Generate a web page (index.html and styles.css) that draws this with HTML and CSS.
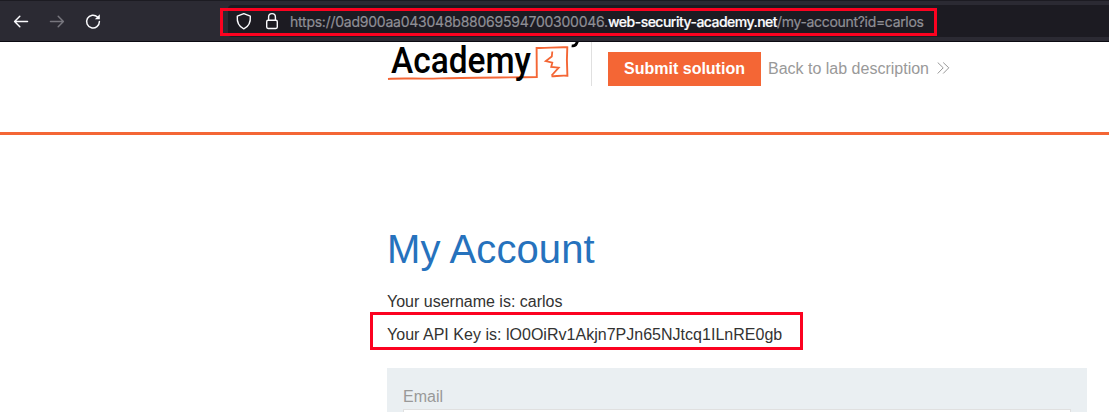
FILE: index.html
```html
<!DOCTYPE html>
<html lang="en">
<head>
<meta charset="utf-8">
<title>My Account</title>
<link rel="stylesheet" href="styles.css">
</head>
<body>
<div class="toolbar">
  <svg class="nav" width="110" height="36" viewBox="0 3 110 36" fill="none" stroke-width="1.5" stroke-linecap="round" stroke-linejoin="round">
    <path stroke="#fbfbfe" d="M27.5 21.5H14.8M19.8 16.3L14.6 21.5L19.8 26.7"/>
    <path stroke="#77767e" d="M50.5 21.5H63.2M58.2 16.3L63.4 21.5L58.2 26.7"/>
    <path stroke="#fbfbfe" d="M97.5 17A6.4 6.4 0 1 0 99.4 21.5"/>
    <path fill="#fbfbfe" d="M99.8 14.2V19.3H94.8Z"/>
  </svg>
  <div class="address">
    <svg class="guards" width="62" height="32" viewBox="228 5 62 32" fill="none" stroke="#fbfbfe" stroke-width="1.4" stroke-linejoin="round">
      <path d="M243.8 13.6L250.3 16.2C250.8 22 248.5 26.6 243.8 28.8C239.1 26.6 236.8 22 237.3 16.2Z"/>
      <rect x="266.7" y="20.3" width="10.6" height="8.2" rx="1.4"/>
      <path d="M268.6 20V17A3.4 3.4 0 0 1 275.4 17V20"/>
    </svg>
    <div class="url"><span class="host">https://0ad900aa043048b88069594700300046.</span><span class="domain">web-security-academy.net</span><span class="path">/my-account?id=carlos</span></div>
    <div class="mark mark-url"></div>
  </div>
</div>
<header class="lab-header">
  <svg class="logo" width="204" height="44" viewBox="387 42 204 44">
    <path d="M388 79C400 77.8 420 79.2 440 78.4S505 77.5 536.8 77L536.6 48C546 48.5 556 46.8 567.3 47.3L566.9 60L567.4 75.8C562 75.2 556 76.2 551.5 76.2" fill="none" stroke="#f46635" stroke-width="1.9"/>
    <path d="M552.3 51.5L551.8 56.5L545.8 61L552.3 62.6L551.2 67L558.7 67.7L551.6 75.5" fill="none" stroke="#f46635" stroke-width="1.8"/>
    <text class="wordmark" x="391" y="73" textLength="140" lengthAdjust="spacingAndGlyphs">Academy</text>
    <path d="M579.2 41L577.6 44.6C576.5 46.8 574.5 47.7 571.5 47.2L571.8 44.4C574.5 44.9 575.2 43.5 576 41Z"/>
  </svg>
  <div class="actions">
    <a class="submit">Submit solution</a>
    <a class="back">Back to lab description</a>
    <svg class="chevrons" width="13" height="14" viewBox="0 0 13 14" fill="none" stroke="#999" stroke-width="1"><path d="M.7 .5L6.2 5.8L.7 11.5M6.2 .5L11.8 5.8L6.2 11.5"/></svg>
  </div>
</header>
<main class="account">
  <h1>My Account</h1>
  <p>Your username is: carlos</p>
  <p class="key">Your API Key is: lO0OiRv1Akjn7PJn65NJtcq1ILnRE0gb<span class="mark mark-key"></span></p>
  <form class="email-form">
    <label for="email">Email</label>
    <input id="email" type="email">
  </form>
</main>
</body>
</html>
```
FILE: styles.css
```css
* { box-sizing: border-box; }
html, body { height: 100%; overflow: hidden; }
body { display: flex; flex-direction: column; margin: 0; background: #fff; color: #333332; font: 16px/20px "Liberation Sans", Arial, sans-serif; }
.toolbar { display: flex; flex: none; align-items: flex-start; height: 42px; padding-top: 4px; background: #2b2a33; border-top: 1px solid #1c1b22; border-bottom: 1px solid #0b0a12; }
.nav { margin: -2px 118px 0 0; }
.address { position: relative; display: flex; flex: 1; height: 32px; background: #1c1b22; border-radius: 4px 0 0 4px; }
.guards { flex: none; }
.url { display: flex; color: #8f8f96; font: 14px/34px Inter, sans-serif; white-space: nowrap; -webkit-text-stroke: 0.2px; }
.host { width: 318px; letter-spacing: -0.24px; }
.domain { width: 169px; color: #fbfbfe; letter-spacing: -0.52px; font-weight: 500; }
.path { letter-spacing: -0.32px; }
.mark { position: absolute; border: 3px solid #fc0220; }
.mark-url { left: -8px; top: 3px; width: 717px; height: 28px; }
.lab-header { display: flex; flex: none; height: 93px; padding-left: 387px; border-bottom: 3px solid #f46635; }
.logo { flex: none; }
.wordmark { font: 500 37px Roboto, sans-serif; }
.actions { display: flex; align-items: flex-start; height: 44px; padding: 10px 0 0 16px; border-left: 1px solid #e0e0e0; }
.submit { width: 153px; height: 34px; background: #f46635; color: #fff; font-weight: bold; line-height: 34px; text-align: center; }
.back { margin-left: 7px; color: #999; line-height: 34px; }
.chevrons { margin: 10px 0 0 8px; }
.account { display: flex; flex: 1; flex-direction: column; min-height: 0; width: 1087px; padding: 91px 0 0 387px; }
h1 { flex: none; margin: 0; color: #2672bd; font-size: 40px; font-weight: normal; line-height: 46px; letter-spacing: 0.1px; }
p { margin: 20px 0 0; }
.key { position: relative; margin-top: 13px; letter-spacing: 0.02px; }
.mark-key { left: -17px; top: -13px; width: 433px; height: 38px; }
.email-form { display: flex; flex: 1; flex-direction: column; min-height: 0; margin-top: 23px; padding: 19px 16px 0; background: #eaeff2; }
label { flex: none; height: 22px; color: #999; }
input { flex: 1; min-height: 0; width: 668px; padding: 0; border: 1px solid #e0e0e0; border-bottom: 0; background: #fff; }
```
